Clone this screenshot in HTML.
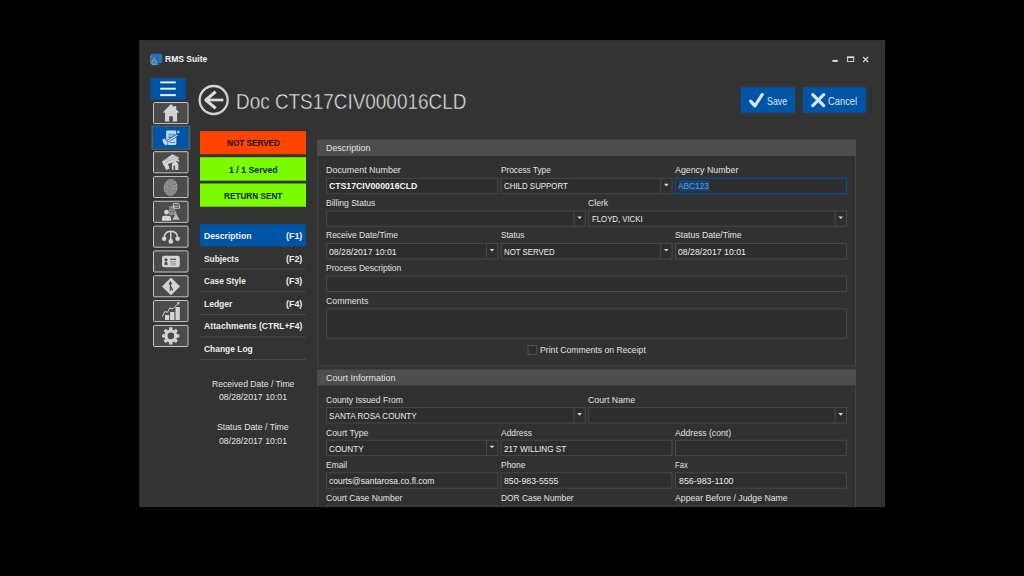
<!DOCTYPE html>
<html><head><meta charset="utf-8">
<style>
*{box-sizing:border-box;margin:0;padding:0}
html,body{width:1024px;height:576px;background:#000;overflow:hidden}
body{font-family:"Liberation Sans",sans-serif;color:#e6e6e6;position:relative}
svg.bg{position:absolute;left:0;top:0}
.clip{position:absolute;left:0;top:0;width:1024px;height:507px;overflow:hidden}
.t{position:absolute;white-space:nowrap;line-height:1;transform-origin:0 50%}
</style></head><body>
<svg class="bg" width="1024" height="576" viewBox="0 0 1024 576">
<rect x="139.20" y="40.10" width="745.90" height="467.10" fill="#333333"/>
<rect x="832.40" y="59.90" width="5.40" height="2.00" fill="#dcdcdc"/>
<rect x="847.40" y="57.30" width="6.30" height="4.20" fill="none" stroke="#dcdcdc" stroke-width="0.9"/>
<rect x="846.95" y="56.40" width="7.20" height="1.70" fill="#dcdcdc"/>
<path d="M863.1 57l5 5M868.1 57l-5 5" stroke="#dcdcdc" stroke-width="1.1"/>
<g transform="translate(150.4 53.8) scale(0.4917)"><path d="M4 0h18a2 2 0 0 1 2 2v14a3 3 0 0 1-3 3H12V9H1V3a3 3 0 0 1 3-3z" fill="#2b6fba"/><path d="M1 4v14a3 3 0 0 0 3 3h13" stroke="#6f9fd6" stroke-width="2" fill="none"/><rect x="3.4" y="12" width="8" height="10.5" rx="2.4" fill="#3b82d0" stroke="#8db6e4" stroke-width="1.5"/><path d="M5.2 12v-1.6a2.2 2.2 0 0 1 4.4 0V12" fill="none" stroke="#a8c8ec" stroke-width="1.3"/><rect x="6.2" y="15.6" width="2.6" height="2.6" fill="#1e5aa0"/></g>
<rect x="150.40" y="78.00" width="35.30" height="21.80" fill="#0054a6"/>
<rect x="160.20" y="81.40" width="15.60" height="2.00" fill="#e6eef8"/>
<rect x="160.20" y="87.70" width="15.60" height="2.00" fill="#e6eef8"/>
<rect x="160.20" y="94.10" width="15.60" height="2.00" fill="#e6eef8"/>
<rect x="153.50" y="102.50" width="34.50" height="21.10" rx="1" fill="#4b4b4b" stroke="#c6c6c6" stroke-width="1"/>
<rect x="153.50" y="151.70" width="34.50" height="21.10" rx="1" fill="#4b4b4b" stroke="#c6c6c6" stroke-width="1"/>
<rect x="153.50" y="176.45" width="34.50" height="21.10" rx="1" fill="#4b4b4b" stroke="#c6c6c6" stroke-width="1"/>
<rect x="153.50" y="201.25" width="34.50" height="21.10" rx="1" fill="#4b4b4b" stroke="#c6c6c6" stroke-width="1"/>
<rect x="153.50" y="226.10" width="34.50" height="21.10" rx="1" fill="#4b4b4b" stroke="#c6c6c6" stroke-width="1"/>
<rect x="153.50" y="250.90" width="34.50" height="21.10" rx="1" fill="#4b4b4b" stroke="#c6c6c6" stroke-width="1"/>
<rect x="153.50" y="275.70" width="34.50" height="21.10" rx="1" fill="#4b4b4b" stroke="#c6c6c6" stroke-width="1"/>
<rect x="153.50" y="300.50" width="34.50" height="21.10" rx="1" fill="#4b4b4b" stroke="#c6c6c6" stroke-width="1"/>
<rect x="153.50" y="325.40" width="34.50" height="21.10" rx="1" fill="#4b4b4b" stroke="#c6c6c6" stroke-width="1"/>
<rect x="151.40" y="125.50" width="39.00" height="24.20" fill="#5a5a5a"/>
<rect x="153.20" y="126.80" width="35.20" height="21.90" fill="#0054a6"/>
<g transform="translate(153 102)"><path d="M18 2.1L26.3 10.5H24.1V19.5H19.8V14.2H16.2V19.5H12V10.5H9.7Z M21.2 3.9h2v4.6h-2z" fill="#d4d4d4"/></g>
<g transform="translate(153 151.2)"><path d="M19.4 3.1l6.6 3.2-1 2.4 1.6 0.9-0.6 1.2-2-1-13.4 4.6-1.6-4.2z" fill="#d4d4d4"/><path d="M18.9 12.4l3.4-2.6 3 2.6v6.5h-3.2v-4.4h-1.6v4.4h-1.6z" fill="#d4d4d4"/><path d="M9.6 11.4l4.6-1.4 2.4 7.6-3.4 1.2z" fill="#d4d4d4"/><path d="M11 9.2L24 4.6M12 11L25 6.6" stroke="#8a8a8a" stroke-width="0.5"/></g>
<g transform="translate(153 175.95)"><g transform="rotate(8 17.6 11.5)"><ellipse cx="17.6" cy="11.5" rx="7" ry="8.6" fill="#7c7c7c"/><ellipse cx="17.6" cy="11.5" rx="6.2" ry="7.6" fill="none" stroke="#b4b4b4" stroke-width="0.7" stroke-dasharray="2.2 1"/><ellipse cx="17.6" cy="11.5" rx="4.6" ry="5.8" fill="none" stroke="#b4b4b4" stroke-width="0.7" stroke-dasharray="2.2 1"/><ellipse cx="17.6" cy="11.5" rx="3" ry="4" fill="none" stroke="#b4b4b4" stroke-width="0.7" stroke-dasharray="2.2 1"/><ellipse cx="17.6" cy="11.5" rx="1.4" ry="2.2" fill="none" stroke="#b4b4b4" stroke-width="0.7" stroke-dasharray="2.2 1"/></g></g>
<g transform="translate(153 200.75)"><circle cx="13.5" cy="11.4" r="2.4" fill="#d4d4d4"/><path d="M9 19.9v-2.6a2.4 2.4 0 0 1 2.4-2.4h4.2a2.4 2.4 0 0 1 2.4 2.4v2.6z" fill="#d4d4d4"/><path d="M16.3 5.4h5.6v9h-5.6z" fill="#a8a8a8"/><path d="M17.7 5.4v9M19.1 5.4v9M20.5 5.4v9M16.3 8h5.6M16.3 10.6h5.6" stroke="#555" stroke-width="0.5"/><path d="M20.4 2.9h5.2l1 2v2.6h-6.2z" fill="none" stroke="#d4d4d4" stroke-width="0.9"/><path d="M21.4 5.4h4" stroke="#d4d4d4" stroke-width="1"/><path d="M22.2 9v5l-3 5h7.6l-3-5" fill="#bdbdbd"/></g>
<g transform="translate(153 225.6)"><path d="M11.2 13C11.2 7.6 14 5.7 17.8 5.7S24.6 7.6 24.6 13M17.8 5.7V15.5" fill="none" stroke="#d4d4d4" stroke-width="1.5"/><circle cx="11.2" cy="13.1" r="2.3" fill="#d4d4d4"/><circle cx="17.8" cy="15.8" r="2.3" fill="#d4d4d4"/><circle cx="24.6" cy="13.1" r="2.3" fill="#d4d4d4"/></g>
<g transform="translate(153 250.4)"><rect x="9" y="5.3" width="17.8" height="11.5" rx="2.2" fill="#d4d4d4"/><circle cx="13" cy="9.3" r="1.5" fill="#4a4a4a"/><path d="M11.4 14.6c0-2.6 0.8-3.4 1.6-3.4s1.6 0.8 1.6 3.4z" fill="#4a4a4a"/><path d="M17.1 8.9h5.9" stroke="#555" stroke-width="1.3"/><path d="M17.1 11.1h5.9M17.1 12.9h5.9M17.1 14.6h5.9" stroke="#8a8a8a" stroke-width="0.8"/></g>
<g transform="translate(153 275.2)"><path d="M18 2.4L27 11.2L18 20L9 11.2Z" fill="#d4d4d4"/><path d="M17.4 15.6V8.4M19.8 15.2L17.6 11" stroke="#4a4a4a" stroke-width="1.3" fill="none"/><path d="M17.4 5.6l2 3.4h-4z" fill="#4a4a4a"/></g>
<g transform="translate(153 300.0)"><path d="M12 15h4.2v4.9H12zM17.1 12h4.3v7.9h-4.3zM22.5 7h4.3v12.9h-4.3z" fill="#d4d4d4"/><path d="M9.4 16.5L11.7 11.5L14.4 12.4L16.7 7.9L19.8 8.8L25.6 3" fill="none" stroke="#d4d4d4" stroke-width="1"/><path d="M26.6 2l-0.6 3-2.4-2.4z" fill="#d4d4d4"/></g>
<g transform="translate(153 324.9)"><rect x="16.2" y="2.4" width="3.2" height="4" fill="#d4d4d4" transform="rotate(0 17.8 11)"/><rect x="16.2" y="2.4" width="3.2" height="4" fill="#d4d4d4" transform="rotate(45 17.8 11)"/><rect x="16.2" y="2.4" width="3.2" height="4" fill="#d4d4d4" transform="rotate(90 17.8 11)"/><rect x="16.2" y="2.4" width="3.2" height="4" fill="#d4d4d4" transform="rotate(135 17.8 11)"/><rect x="16.2" y="2.4" width="3.2" height="4" fill="#d4d4d4" transform="rotate(180 17.8 11)"/><rect x="16.2" y="2.4" width="3.2" height="4" fill="#d4d4d4" transform="rotate(225 17.8 11)"/><rect x="16.2" y="2.4" width="3.2" height="4" fill="#d4d4d4" transform="rotate(270 17.8 11)"/><rect x="16.2" y="2.4" width="3.2" height="4" fill="#d4d4d4" transform="rotate(315 17.8 11)"/><circle cx="17.8" cy="11" r="4.9" fill="none" stroke="#d4d4d4" stroke-width="3.2"/></g>
<rect x="166.2" y="130.4" width="10.1" height="14.5" rx="1.3" fill="#c6d9ee"/><path d="M168.3 134.2H175.2M168.3 136H174.8M168.3 137.5H171.6M170 142.4H175.4" stroke="#2c6cb4" stroke-width="0.8"/><path d="M177.6 134.9L167.6 141.1" stroke="#0054a6" stroke-width="2.7"/><path d="M177.3 135.1L168 140.9" stroke="#d3e2f3" stroke-width="1.25"/><path d="M162 139.7L164.8 138L168 143.8L165.6 145.4L163.5 143.9Z" fill="#c6d9ee" stroke="#0054a6" stroke-width="0.5"/><path d="M178.4 130.5L179.9 132L178.4 133.5L176.9 132Z" fill="#c6d9ee"/>
<circle cx="213.65" cy="100" r="14" fill="none" stroke="#d2d2d2" stroke-width="2.3"/>
<path d="M223.4 100H206" fill="none" stroke="#dcdcdc" stroke-width="2.7"/><path d="M215.7 91.6L205.9 100l9.8 8.4" fill="none" stroke="#dcdcdc" stroke-width="3.1" stroke-linejoin="round"/>
<rect x="740.60" y="87.20" width="54.70" height="25.60" fill="#0054a6"/>
<rect x="802.80" y="87.20" width="63.50" height="25.60" fill="#0054a6"/>
<path d="M750.6 101.2l4.3 4.6L762.2 94.6" fill="none" stroke="#d6e4f4" stroke-width="3.2" stroke-linecap="round" stroke-linejoin="round"/>
<path d="M812.8 94.6l10.9 11M823.7 94.6l-10.9 11" fill="none" stroke="#d6e4f4" stroke-width="3.2" stroke-linecap="round"/>
<rect x="200.00" y="131.10" width="106.00" height="23.20" fill="#ff4500"/>
<rect x="200.00" y="157.20" width="106.00" height="23.50" fill="#7cfc00"/>
<rect x="200.00" y="183.50" width="106.00" height="23.20" fill="#7cfc00"/>
<rect x="199.90" y="224.20" width="106.10" height="22.20" fill="#0054a6"/>
<path d="M199.90 269.20H305.80" stroke="#4a4a4a" stroke-width="1"/>
<path d="M199.90 291.70H305.80" stroke="#4a4a4a" stroke-width="1"/>
<path d="M199.90 314.40H305.80" stroke="#4a4a4a" stroke-width="1"/>
<path d="M199.90 337.00H305.80" stroke="#4a4a4a" stroke-width="1"/>
<path d="M199.90 359.50H305.80" stroke="#4a4a4a" stroke-width="1"/>
<rect x="317.70" y="140.20" width="537.80" height="225.70" fill="#313131" stroke="#454545" stroke-width="1"/>
<rect x="317.20" y="139.70" width="538.80" height="16.20" fill="#4e4e4e"/>
<rect x="317.70" y="370.10" width="537.80" height="169.90" fill="#313131" stroke="#454545" stroke-width="1"/>
<rect x="317.20" y="369.60" width="538.80" height="15.80" fill="#4e4e4e"/>
<rect x="326.60" y="178.30" width="171.15" height="15.40" fill="#2e2e2e" stroke="#484848" stroke-width="1"/>
<rect x="501.20" y="178.30" width="170.80" height="15.40" fill="#2e2e2e" stroke="#484848" stroke-width="1"/>
<path d="M660.70 178.30V193.70" stroke="#484848" stroke-width="1"/>
<path d="M664.00 183.80h4.6l-2.3 2.6z" fill="#dadada"/>
<rect x="675.50" y="178.30" width="170.90" height="15.40" fill="#2e2e2e" stroke="#0e4b8c" stroke-width="1.3"/>
<rect x="678.75" y="180.10" width="30.85" height="11.20" fill="#1a426f"/>
<rect x="326.60" y="210.90" width="258.70" height="15.40" fill="#2e2e2e" stroke="#484848" stroke-width="1"/>
<path d="M574.00 210.90V226.30" stroke="#484848" stroke-width="1"/>
<path d="M577.30 216.40h4.6l-2.3 2.6z" fill="#dadada"/>
<rect x="588.70" y="210.90" width="257.80" height="15.40" fill="#2e2e2e" stroke="#484848" stroke-width="1"/>
<path d="M835.20 210.90V226.30" stroke="#484848" stroke-width="1"/>
<path d="M838.50 216.40h4.6l-2.3 2.6z" fill="#dadada"/>
<rect x="326.60" y="243.50" width="171.15" height="15.40" fill="#2e2e2e" stroke="#484848" stroke-width="1"/>
<path d="M486.45 243.50V258.90" stroke="#484848" stroke-width="1"/>
<path d="M489.75 249.00h4.6l-2.3 2.6z" fill="#dadada"/>
<rect x="501.20" y="243.50" width="170.80" height="15.40" fill="#2e2e2e" stroke="#484848" stroke-width="1"/>
<path d="M660.70 243.50V258.90" stroke="#484848" stroke-width="1"/>
<path d="M664.00 249.00h4.6l-2.3 2.6z" fill="#dadada"/>
<rect x="675.50" y="243.50" width="170.90" height="15.40" fill="#2e2e2e" stroke="#484848" stroke-width="1"/>
<rect x="326.60" y="276.10" width="519.90" height="15.40" fill="#2e2e2e" stroke="#484848" stroke-width="1"/>
<rect x="326.60" y="308.80" width="519.90" height="29.50" fill="#2e2e2e" stroke="#484848" stroke-width="1"/>
<rect x="528.00" y="345.50" width="8.80" height="8.80" fill="#2d2d2d" stroke="#505050" stroke-width="1"/>
<rect x="326.60" y="407.60" width="258.70" height="15.40" fill="#2e2e2e" stroke="#484848" stroke-width="1"/>
<path d="M574.00 407.60V423.00" stroke="#484848" stroke-width="1"/>
<path d="M577.30 413.10h4.6l-2.3 2.6z" fill="#dadada"/>
<rect x="588.70" y="407.60" width="257.80" height="15.40" fill="#2e2e2e" stroke="#484848" stroke-width="1"/>
<path d="M835.20 407.60V423.00" stroke="#484848" stroke-width="1"/>
<path d="M838.50 413.10h4.6l-2.3 2.6z" fill="#dadada"/>
<rect x="326.60" y="440.20" width="171.15" height="15.40" fill="#2e2e2e" stroke="#484848" stroke-width="1"/>
<path d="M486.45 440.20V455.60" stroke="#484848" stroke-width="1"/>
<path d="M489.75 445.70h4.6l-2.3 2.6z" fill="#dadada"/>
<rect x="501.20" y="440.20" width="170.80" height="15.40" fill="#2e2e2e" stroke="#484848" stroke-width="1"/>
<rect x="675.50" y="440.20" width="170.90" height="15.40" fill="#2e2e2e" stroke="#484848" stroke-width="1"/>
<rect x="326.60" y="472.80" width="171.15" height="15.40" fill="#2e2e2e" stroke="#484848" stroke-width="1"/>
<rect x="501.20" y="472.80" width="170.80" height="15.40" fill="#2e2e2e" stroke="#484848" stroke-width="1"/>
<rect x="675.50" y="472.80" width="170.90" height="15.40" fill="#2e2e2e" stroke="#484848" stroke-width="1"/>
<rect x="326.60" y="505.40" width="171.15" height="15.40" fill="#2e2e2e" stroke="#484848" stroke-width="1"/>
<rect x="501.20" y="505.40" width="170.80" height="15.40" fill="#2e2e2e" stroke="#484848" stroke-width="1"/>
<rect x="675.50" y="505.40" width="170.90" height="15.40" fill="#2e2e2e" stroke="#484848" stroke-width="1"/>
<rect x="0.00" y="507.20" width="1024.00" height="68.80" fill="#000"/>
</svg>
<div class="clip">
<div class="t" style="left:165.0px;top:53.51px;font-size:9.6px;color:#f2f2f2;font-weight:bold;transform:scaleX(0.891)">RMS Suite</div>
<div class="t" style="left:236.0px;top:90.59px;font-size:21.2px;color:#e4e4e4;-webkit-text-stroke:0.45px #333;transform:scaleX(0.893)">Doc CTS17CIV000016CLD</div>
<div class="t" style="left:766.6px;top:95.67px;font-size:10.6px;color:#dfe9f4;transform:scaleX(0.836)">Save</div>
<div class="t" style="left:828.4px;top:95.67px;font-size:10.6px;color:#dfe9f4;transform:scaleX(0.882)">Cancel</div>
<div class="t" style="left:226.6px;top:138.56px;font-size:9.3px;color:#1a0d05;font-weight:bold;transform:scaleX(0.878)">NOT SERVED</div>
<div class="t" style="left:228.6px;top:165.71px;font-size:9.3px;color:#10240a;font-weight:bold;transform:scaleX(0.942)">1 / 1 Served</div>
<div class="t" style="left:223.6px;top:191.71px;font-size:9.3px;color:#10240a;font-weight:bold;transform:scaleX(0.883)">RETURN SENT</div>
<div class="t" style="left:203.7px;top:231.71px;font-size:9.3px;color:#eef3f8;font-weight:bold;transform:scaleX(0.927)">Description</div>
<div class="t" style="left:286.0px;top:231.71px;font-size:9.3px;color:#eef3f8;font-weight:bold;transform:scaleX(0.956)">(F1)</div>
<div class="t" style="left:203.7px;top:254.71px;font-size:9.3px;color:#ededed;font-weight:bold;transform:scaleX(0.898)">Subjects</div>
<div class="t" style="left:286.0px;top:254.71px;font-size:9.3px;color:#ededed;font-weight:bold;transform:scaleX(0.956)">(F2)</div>
<div class="t" style="left:203.7px;top:276.71px;font-size:9.3px;color:#ededed;font-weight:bold;transform:scaleX(0.887)">Case Style</div>
<div class="t" style="left:286.0px;top:276.71px;font-size:9.3px;color:#ededed;font-weight:bold;transform:scaleX(0.956)">(F3)</div>
<div class="t" style="left:203.7px;top:299.71px;font-size:9.3px;color:#ededed;font-weight:bold;transform:scaleX(0.913)">Ledger</div>
<div class="t" style="left:286.0px;top:299.71px;font-size:9.3px;color:#ededed;font-weight:bold;transform:scaleX(0.956)">(F4)</div>
<div class="t" style="left:203.7px;top:321.66px;font-size:9.3px;color:#ededed;font-weight:bold;transform:scaleX(0.934)">Attachments</div>
<div class="t" style="left:259.0px;top:321.66px;font-size:9.3px;color:#ededed;font-weight:bold;transform:scaleX(0.916)">(CTRL+F4)</div>
<div class="t" style="left:203.7px;top:344.51px;font-size:9.3px;color:#ededed;font-weight:bold;transform:scaleX(0.907)">Change Log</div>
<div class="t" style="left:211.7px;top:378.66px;font-size:9.4px;color:#e2e2e2;transform:scaleX(0.919)">Received Date / Time</div>
<div class="t" style="left:218.5px;top:391.56px;font-size:9.4px;color:#e2e2e2;transform:scaleX(0.932)">08/28/2017 10:01</div>
<div class="t" style="left:216.8px;top:421.66px;font-size:9.4px;color:#e2e2e2;transform:scaleX(0.930)">Status Date / Time</div>
<div class="t" style="left:218.5px;top:435.66px;font-size:9.4px;color:#e2e2e2;transform:scaleX(0.932)">08/28/2017 10:01</div>
<div class="t" style="left:325.8px;top:142.61px;font-size:9.4px;color:#e2e2e2;transform:scaleX(0.947)">Description</div>
<div class="t" style="left:325.9px;top:164.61px;font-size:9.4px;color:#e2e2e2;transform:scaleX(0.951)">Document Number</div>
<div class="t" style="left:500.9px;top:164.61px;font-size:9.4px;color:#e2e2e2;transform:scaleX(0.878)">Process Type</div>
<div class="t" style="left:674.9px;top:164.61px;font-size:9.4px;color:#e2e2e2;transform:scaleX(0.942)">Agency Number</div>
<div class="t" style="left:329.2px;top:181.56px;font-size:9.2px;color:#f4f4f4;font-weight:bold;transform:scaleX(0.945)">CTS17CIV000016CLD</div>
<div class="t" style="left:504.2px;top:181.56px;font-size:9.2px;color:#ededed;transform:scaleX(0.859)">CHILD SUPPORT</div>
<div class="t" style="left:678.2px;top:181.56px;font-size:9.2px;color:#5f9ad6;transform:scaleX(0.906)">ABC123</div>
<div class="t" style="left:325.9px;top:197.71px;font-size:9.4px;color:#e2e2e2;transform:scaleX(0.911)">Billing Status</div>
<div class="t" style="left:588.0px;top:197.71px;font-size:9.4px;color:#e2e2e2;transform:scaleX(0.923)">Clerk</div>
<div class="t" style="left:591.9px;top:214.66px;font-size:9.2px;color:#ededed;transform:scaleX(0.847)">FLOYD, VICKI</div>
<div class="t" style="left:325.9px;top:229.56px;font-size:9.4px;color:#e2e2e2;transform:scaleX(0.907)">Receive Date/Time</div>
<div class="t" style="left:500.9px;top:229.56px;font-size:9.4px;color:#e2e2e2;transform:scaleX(0.884)">Status</div>
<div class="t" style="left:674.9px;top:229.56px;font-size:9.4px;color:#e2e2e2;transform:scaleX(0.924)">Status Date/Time</div>
<div class="t" style="left:329.2px;top:247.51px;font-size:9.2px;color:#ededed;transform:scaleX(0.946)">08/28/2017 10:01</div>
<div class="t" style="left:504.2px;top:247.51px;font-size:9.2px;color:#ededed;transform:scaleX(0.853)">NOT SERVED</div>
<div class="t" style="left:678.2px;top:247.51px;font-size:9.2px;color:#ededed;transform:scaleX(0.949)">08/28/2017 10:01</div>
<div class="t" style="left:325.9px;top:262.66px;font-size:9.4px;color:#e2e2e2;transform:scaleX(0.903)">Process Description</div>
<div class="t" style="left:325.9px;top:295.71px;font-size:9.4px;color:#e2e2e2;transform:scaleX(0.933)">Comments</div>
<div class="t" style="left:540.4px;top:344.61px;font-size:9.4px;color:#e2e2e2;transform:scaleX(0.923)">Print Comments on Receipt</div>
<div class="t" style="left:325.8px;top:372.71px;font-size:9.4px;color:#e2e2e2;transform:scaleX(0.958)">Court Information</div>
<div class="t" style="left:325.9px;top:394.56px;font-size:9.4px;color:#e2e2e2;transform:scaleX(0.911)">County Issued From</div>
<div class="t" style="left:588.1px;top:394.56px;font-size:9.4px;color:#e2e2e2;transform:scaleX(0.934)">Court Name</div>
<div class="t" style="left:329.4px;top:411.51px;font-size:9.2px;color:#ededed;transform:scaleX(0.888)">SANTA ROSA COUNTY</div>
<div class="t" style="left:325.9px;top:427.51px;font-size:9.4px;color:#e2e2e2;transform:scaleX(0.926)">Court Type</div>
<div class="t" style="left:500.9px;top:427.51px;font-size:9.4px;color:#e2e2e2;transform:scaleX(0.901)">Address</div>
<div class="t" style="left:675.0px;top:427.51px;font-size:9.4px;color:#e2e2e2;transform:scaleX(0.919)">Address (cont)</div>
<div class="t" style="left:329.4px;top:444.61px;font-size:9.2px;color:#ededed;transform:scaleX(0.892)">COUNTY</div>
<div class="t" style="left:504.2px;top:444.61px;font-size:9.2px;color:#ededed;transform:scaleX(0.891)">217 WILLING ST</div>
<div class="t" style="left:325.9px;top:459.61px;font-size:9.4px;color:#e2e2e2;transform:scaleX(0.900)">Email</div>
<div class="t" style="left:500.9px;top:459.61px;font-size:9.4px;color:#e2e2e2;transform:scaleX(0.904)">Phone</div>
<div class="t" style="left:675.0px;top:459.61px;font-size:9.4px;color:#e2e2e2;transform:scaleX(0.812)">Fax</div>
<div class="t" style="left:329.4px;top:476.56px;font-size:9.2px;color:#ededed;transform:scaleX(0.924)">courts@santarosa.co.fl.com</div>
<div class="t" style="left:504.2px;top:476.56px;font-size:9.2px;color:#ededed;transform:scaleX(0.951)">850-983-5555</div>
<div class="t" style="left:678.6px;top:476.56px;font-size:9.2px;color:#ededed;transform:scaleX(0.964)">856-983-1100</div>
<div class="t" style="left:325.9px;top:492.56px;font-size:9.4px;color:#e2e2e2;transform:scaleX(0.915)">Court Case Number</div>
<div class="t" style="left:500.9px;top:492.56px;font-size:9.4px;color:#e2e2e2;transform:scaleX(0.894)">DOR Case Number</div>
<div class="t" style="left:675.0px;top:492.56px;font-size:9.4px;color:#e2e2e2;transform:scaleX(0.927)">Appear Before / Judge Name</div>
</div>
</body></html>
